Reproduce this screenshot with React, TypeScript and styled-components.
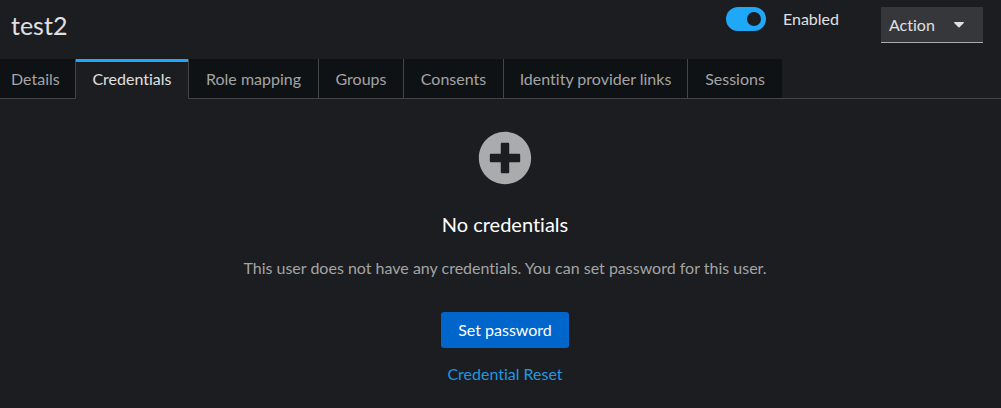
import React, { useState } from "react";
import styled, { createGlobalStyle } from "styled-components";

const color = {
  page: "#1b1d21",
  tab: "#0f1214",
  line: "#444548",
  control: "#36373a",
  muted: "#a3a4a5",
  icon: "#aaabac",
  text: "#e0e0e0",
  accent: "#1fa7f8",
  link: "#2098e0",
  primary: "#0066cc",
};

const GlobalStyle = createGlobalStyle`
  *, *::before, *::after { box-sizing: border-box; }
  body {
    margin: 0;
    background: ${color.page};
    color: ${color.text};
    font-family: Lato, "Liberation Sans", sans-serif;
    font-size: 16px;
    font-variant-ligatures: none;
    line-height: 24px;
  }
  button, input { font: inherit; font-variant-ligatures: none; }
`;

const Header = styled.header`
  display: flex;
  align-items: flex-start;
  justify-content: space-between;
  height: 59px;
  padding: 7px 18px 0 11px;
`;

const Title = styled.h1`
  margin: 0;
  font-size: 25px;
  font-weight: 400;
  line-height: 36px;
`;

const Tools = styled.div`
  display: flex;
  align-items: flex-start;
  gap: 42px;
`;

const SwitchLabel = styled.label`
  display: flex;
  gap: 17px;
  cursor: pointer;
`;

const Switch = styled.input`
  appearance: none;
  display: flex;
  align-items: center;
  width: 40px;
  height: 24px;
  margin: 0;
  padding: 0 5px;
  border-radius: 12px;
  background: ${color.control};
  cursor: pointer;

  &::before {
    content: "";
    width: 14px;
    height: 14px;
    border-radius: 50%;
    background: ${color.muted};
  }

  &:checked {
    justify-content: flex-end;
    background: ${color.accent};
  }

  &:checked::before { background: ${color.page}; }
`;

const ActionButton = styled.button`
  display: flex;
  align-items: center;
  justify-content: space-between;
  width: 102px;
  height: 36px;
  padding: 0 19px 0 8px;
  border: 0;
  border-bottom: 1px solid ${color.icon};
  background: ${color.control};
  color: ${color.text};
  cursor: pointer;
`;

const TabBar = styled.div`
  display: flex;
  height: 40px;
  border-bottom: 1px solid ${color.line};
`;

const Tab = styled.button<{ $active: boolean; $width: number }>`
  flex: 0 0 ${(p) => p.$width}px;
  height: ${(p) => (p.$active ? 40 : 39)}px;
  padding: 0;
  border: 0;
  border-right: 1px solid ${color.line};
  background: ${(p) => (p.$active ? color.page : color.tab)};
  box-shadow: ${(p) => (p.$active ? `0 0 0 transparent, inset 0 3px ${color.accent}` : "none")};
  color: ${(p) => (p.$active ? color.text : color.muted)};
  text-align: center;
  white-space: nowrap;
  cursor: pointer;

  &:first-child {
    padding-left: 11px;
    text-align: left;
  }
  &:last-child { border-right: 0; }
`;

const EmptyState = styled.main`
  display: flex;
  flex-direction: column;
  align-items: center;
  padding: 32px 0 20px 9px;
  text-align: center;
`;

const EmptyTitle = styled.h2`
  margin: 23px 0 0;
  color: #ffffff;
  font-size: 20px;
  font-weight: 400;
  line-height: 32px;
`;

const EmptyText = styled.p`
  margin: 16px 0 0;
  color: ${color.muted};
`;

const PrimaryButton = styled.button`
  height: 36px;
  margin-top: 32px;
  padding: 0 17px;
  border: 0;
  border-radius: 3px;
  background: ${color.primary};
  color: #ffffff;
  cursor: pointer;
`;

const ResetLink = styled.a`
  margin-top: 14px;
  color: ${color.link};
  text-decoration: none;
`;

const tabs = [
  { name: "Details", width: 76 },
  { name: "Credentials", width: 113 },
  { name: "Role mapping", width: 130 },
  { name: "Groups", width: 85 },
  { name: "Consents", width: 100 },
  { name: "Identity provider links", width: 184 },
  { name: "Sessions", width: 94 },
];

export default function App() {
  const [active, setActive] = useState("Credentials");
  const [enabled, setEnabled] = useState(true);

  return (
    <>
      <GlobalStyle />
      <Header>
        <Title>test2</Title>
        <Tools>
          <SwitchLabel>
            <Switch
              type="checkbox"
              role="switch"
              checked={enabled}
              onChange={(e) => setEnabled(e.target.checked)}
            />
            Enabled
          </SwitchLabel>
          <ActionButton type="button" aria-haspopup="menu">
            Action
            <svg width="10" height="6" viewBox="0 0 10 6" aria-hidden="true">
              <path
                d="M.6 0h8.800c.5 0 .8.6.4 1L5.600 5.200a.85.85 0 0 1-1.200 0L.2 1C-.2.6.1 0 .6 0z"
                fill="currentColor"
              />
            </svg>
          </ActionButton>
        </Tools>
      </Header>
      <TabBar role="tablist">
        {tabs.map(({ name, width }) => (
          <Tab
            key={name}
            type="button"
            role="tab"
            aria-selected={name === active}
            $active={name === active}
            $width={width}
            onClick={() => setActive(name)}
          >
            {name}
          </Tab>
        ))}
      </TabBar>
      <EmptyState>
        <svg width="54" height="54" viewBox="0 0 512 512" aria-hidden="true">
          <path
            d="M256 8C119 8 8 119 8 256s111 248 248 248 248-111 248-248S393 8 256 8zm144 276c0 6.600-5.400 12-12 12h-92v92c0 6.600-5.400 12-12 12h-56c-6.600 0-12-5.400-12-12v-92h-92c-6.600 0-12-5.400-12-12v-56c0-6.600 5.400-12 12-12h92v-92c0-6.600 5.400-12 12-12h56c6.600 0 12 5.400 12 12v92h92c6.600 0 12 5.400 12 12v56z"
            fill={color.icon}
          />
        </svg>
        <EmptyTitle>No credentials</EmptyTitle>
        <EmptyText>
          This user does not have any credentials. You can set password for this user.
        </EmptyText>
        <PrimaryButton type="button">Set password</PrimaryButton>
        <ResetLink href="#credential-reset">Credential Reset</ResetLink>
      </EmptyState>
    </>
  );
}
